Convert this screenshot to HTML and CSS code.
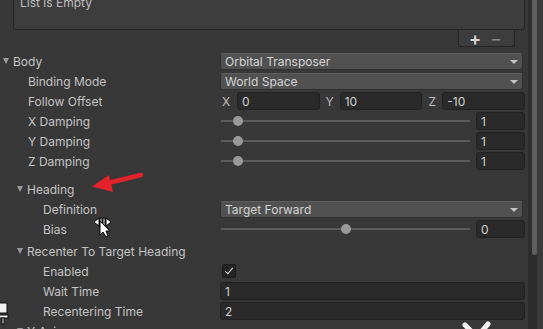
FILE: index.html
```html
<!DOCTYPE html>
<html lang="en">
<head>
    <meta charset="UTF-8">
    <title>Inspector / Orbital Transposer</title>
    <link rel="stylesheet" href="styles.css">
</head>
<body>

    <div class="page">
        <div class="inspector">

            <div class="list-box">List is Empty</div>
            <div class="list-footer">
                <span class="list-btn">+</span>
                <span class="list-btn minus">&minus;</span>
            </div>

            <div class="row">
                <div class="label lvl0"><i class="fold"></i>Body</div>
                <div class="field dropdown">Orbital Transposer</div>
            </div>
            <div class="row">
                <div class="label lvl1">Binding Mode</div>
                <div class="field dropdown">World Space</div>
            </div>
            <div class="row">
                <div class="label lvl1">Follow Offset</div>
                <div class="field vec">
                    <span class="axis first">X</span><div class="input">0</div>
                    <span class="axis">Y</span><div class="input">10</div>
                    <span class="axis">Z</span><div class="input">-10</div>
                </div>
            </div>
            <div class="row">
                <div class="label lvl1">X Damping</div>
                <div class="field slider-row">
                    <div class="slider"><span class="thumb" style="--p:0.05"></span></div>
                    <div class="input num">1</div>
                </div>
            </div>
            <div class="row">
                <div class="label lvl1">Y Damping</div>
                <div class="field slider-row">
                    <div class="slider"><span class="thumb" style="--p:0.05"></span></div>
                    <div class="input num">1</div>
                </div>
            </div>
            <div class="row">
                <div class="label lvl1">Z Damping</div>
                <div class="field slider-row">
                    <div class="slider"><span class="thumb" style="--p:0.05"></span></div>
                    <div class="input num">1</div>
                </div>
            </div>

            <div class="group">
                <div class="row">
                    <div class="label lvl1f"><i class="fold"></i>Heading</div>
                </div>
                <div class="row">
                    <div class="label lvl2">Definition</div>
                    <div class="field dropdown">Target Forward</div>
                </div>
                <div class="row">
                    <div class="label lvl2">Bias</div>
                    <div class="field slider-row">
                        <div class="slider"><span class="thumb" style="--p:0.5"></span></div>
                        <div class="input num">0</div>
                    </div>
                </div>
            </div>

            <div class="group tight">
                <div class="row">
                    <div class="label lvl1f"><i class="fold"></i>Recenter To Target Heading</div>
                </div>
                <div class="row">
                    <div class="label lvl2">Enabled</div>
                    <div class="field"><span class="check"></span></div>
                </div>
                <div class="row">
                    <div class="label lvl2">Wait Time</div>
                    <div class="field input">1</div>
                </div>
                <div class="row">
                    <div class="label lvl2">Recentering Time</div>
                    <div class="field input">2</div>
                </div>
                <div class="row">
                    <div class="label lvl1f"><i class="fold"></i>Y Axis</div>
                </div>
            </div>

        </div>

        <div class="scrollbar">
            <div class="scroll-thumb"></div>
        </div>
    </div>

    <!-- annotations drawn over the capture -->
    <svg class="overlay" width="543" height="329" viewBox="0 0 543 329">
        <line x1="141" y1="175" x2="106" y2="183.5" stroke="#e4222b" stroke-width="4.5" stroke-linecap="round"/>
        <polygon points="92,186.5 109,175 113,192" fill="#e4222b"/>

        <g stroke="#000" stroke-width="1" fill="#fff" stroke-linejoin="round">
            <polygon points="94,222 99,218 99,226"/>
            <rect x="100" y="218" width="2" height="8"/>
            <rect x="103" y="218" width="2" height="8"/>
            <polygon points="111,222 106,218 106,226"/>
            <polygon points="100,221 100,235 103,232 106,237 108,236 106,231 110,231"/>
        </g>

        <g fill="#f2f2f2" stroke="#111" stroke-width="1">
            <rect x="-1" y="303" width="8" height="10"/>
            <rect x="-1" y="315" width="9" height="3"/>
            <rect x="2" y="318" width="2" height="6"/>
        </g>

        <g stroke="#f0f0f0" stroke-width="5" stroke-linecap="round">
            <line x1="465" y1="325" x2="471" y2="331"/>
            <line x1="488" y1="324" x2="482" y2="331"/>
        </g>
    </svg>

</body>
</html>
```

FILE: styles.css
```css
body {
    margin: 0;
    background-color: #383838;
    font-family: 'Inter', 'Noto Sans', sans-serif;
    font-size: 12px;
    color: #c4c4c4;
    overflow: hidden;
}

.page {
    display: flex;
    height: 329px;
}
.inspector {
    flex: 1;
}

/* empty reorderable list */
.list-box {
    margin: -10px 3px 0 13px;
    padding: 4px 0 0 6px;
    box-sizing: border-box;
    height: 40px;
    line-height: 16px;
    background-color: #3d3d3d;
    border: 1px solid #242424;
    border-radius: 0 0 3px 3px;
    color: #bdbdbd;
}
.list-footer {
    display: flex;
    justify-content: space-between;
    align-items: center;
    width: 57px;
    height: 17px;
    margin: 0 13px 4px auto;
    box-sizing: border-box;
    padding: 0 12px 0 10px;
    background-color: #3d3d3d;
    border: 1px solid #242424;
    border-top: none;
    border-radius: 0 0 3px 3px;
}
.list-btn {
    font-size: 18px;
    line-height: 15px;
    font-weight: 600;
    color: #d8d8d8;
}
.list-btn.minus {
    color: #8a8a8a;
    font-weight: 400;
}

/* property rows */
.row {
    display: flex;
    align-items: center;
    height: 20px;
}
.label {
    width: 220px;
    flex: none;
    box-sizing: border-box;
    white-space: nowrap;
    display: flex;
    align-items: center;
}
.lvl0 { padding-left: 3px; }
.lvl1 { padding-left: 28px; }
.lvl1f { padding-left: 17px; }
.lvl2 { padding-left: 43px; }

.fold {
    width: 0;
    height: 0;
    border-left: 3.5px solid transparent;
    border-right: 3.5px solid transparent;
    border-top: 6px solid #9a9a9a;
    margin-right: 4px;
}

.field {
    flex: 1;
    margin-right: 3px;
    min-width: 0;
}

.group {
    margin-top: 8px;
}
.group.tight {
    margin-top: 2px;
}

.dropdown {
    position: relative;
    height: 17px;
    line-height: 16px;
    box-sizing: border-box;
    padding-left: 4px;
    margin-right: 5px;
    background-color: #515151;
    border: 1px solid #303030;
    border-top-color: #5e5e5e;
    border-radius: 3px;
    color: #d4d4d4;
}
.dropdown::after {
    content: "";
    position: absolute;
    right: 4px;
    top: 6px;
    border-left: 4px solid transparent;
    border-right: 4px solid transparent;
    border-top: 4px solid #c4c4c4;
}

.input {
    height: 18px;
    line-height: 17px;
    box-sizing: border-box;
    padding-left: 4px;
    background-color: #2a2a2a;
    border: 1px solid #212121;
    border-radius: 3px;
    color: #d2d2d2;
}

.vec {
    display: flex;
    align-items: center;
}
.vec .input {
    flex: 1;
}
.axis {
    width: 20px;
    flex: none;
    text-align: center;
    color: #bdbdbd;
}
.axis.first {
    width: 17px;
    text-align: left;
    padding-left: 2px;
    box-sizing: border-box;
}

.slider-row {
    display: flex;
    align-items: center;
}
.slider {
    position: relative;
    flex: 1;
    height: 2px;
    margin: 0 6px 0 1px;
    background-color: #5b5b5b;
}
.thumb {
    position: absolute;
    top: -4px;
    left: calc(var(--p) * (100% - 10px));
    width: 10px;
    height: 10px;
    border-radius: 50%;
    background-color: #999;
}
.input.num {
    width: 49px;
    flex: none;
}

.check {
    display: block;
    width: 14px;
    height: 14px;
    margin-left: 2px;
    box-sizing: border-box;
    background-color: #242424;
    border: 1px solid #1b1b1b;
    border-radius: 2px;
    position: relative;
}
.check::after {
    content: "";
    position: absolute;
    left: 4px;
    top: 1px;
    width: 3px;
    height: 7px;
    border-right: 1.5px solid #e2e2e2;
    border-bottom: 1.5px solid #e2e2e2;
    transform: rotate(40deg);
}

/* right scrollbar */
.scrollbar {
    width: 15px;
    flex: none;
    background-color: #2c2c2c;
    border-right: 6px solid #3a3a3a;
    box-sizing: border-box;
}
.scroll-thumb {
    width: 5px;
    height: 255px;
    margin-left: 4px;
    background-color: #5e5e5e;
    border-radius: 0 0 3px 3px;
}

.overlay {
    position: absolute;
    top: 0;
    left: 0;
    pointer-events: none;
}
```
